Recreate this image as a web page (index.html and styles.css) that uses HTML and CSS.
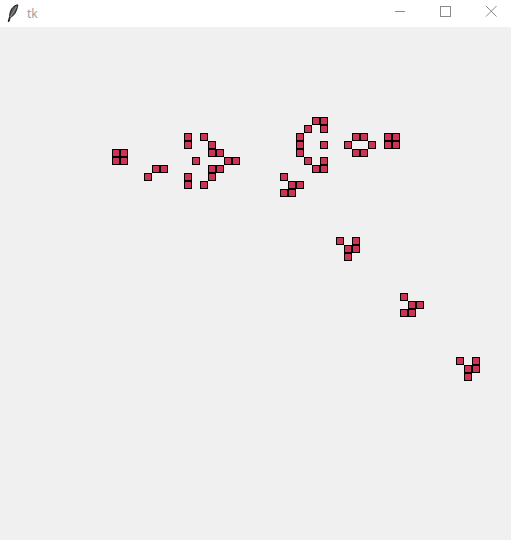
FILE: index.html
```html
<!DOCTYPE html>
<html>
<head>
<meta charset="utf-8">
<link rel="stylesheet" href="styles.css">
</head>
<body>
<div class="window">
  <div class="titlebar">
    <svg class="feather" width="12" height="18" viewBox="0 0 12 18">
      <path d="M10.5 0.8 C7 1.5 4 4.5 3 9 L2.6 12.5 L1.2 17.5 L2 17.6 L3.3 13.3 C7 12 9.5 8 10.8 1.2 Z" fill="#555" stroke="#111" stroke-width="0.9"/>
      <path d="M9.5 2.5 L3.3 13" stroke="#ccc" stroke-width="0.6" fill="none"/>
    </svg>
    <span class="title">tk</span>
    <div class="controls">
      <svg class="ctl" width="46" height="27" viewBox="0 0 46 27"><line x1="22" y1="11.5" x2="32" y2="11.5" stroke="#8a8a8a" stroke-width="1"/></svg>
      <svg class="ctl" width="46" height="27" viewBox="0 0 46 27"><rect x="21.5" y="6.5" width="10" height="10" fill="none" stroke="#8a8a8a" stroke-width="1"/></svg>
      <svg class="ctl" width="46" height="27" viewBox="0 0 46 27"><path d="M21 6 L31.5 16.5 M31.5 6 L21 16.5" stroke="#8a8a8a" stroke-width="1"/></svg>
    </div>
  </div>
  <div class="canvas">
    <div class="cell" style="left:112px;top:122px"></div>
    <div class="cell" style="left:120px;top:122px"></div>
    <div class="cell" style="left:112px;top:130px"></div>
    <div class="cell" style="left:120px;top:130px"></div>

    <div class="cell" style="left:152px;top:138px"></div>
    <div class="cell" style="left:160px;top:138px"></div>
    <div class="cell" style="left:144px;top:146px"></div>

    <div class="cell" style="left:184px;top:106px"></div>
    <div class="cell" style="left:184px;top:114px"></div>
    <div class="cell" style="left:200px;top:106px"></div>
    <div class="cell" style="left:208px;top:114px"></div>
    <div class="cell" style="left:208px;top:122px"></div>
    <div class="cell" style="left:216px;top:122px"></div>
    <div class="cell" style="left:192px;top:130px"></div>
    <div class="cell" style="left:224px;top:130px"></div>
    <div class="cell" style="left:232px;top:130px"></div>
    <div class="cell" style="left:208px;top:138px"></div>
    <div class="cell" style="left:216px;top:138px"></div>
    <div class="cell" style="left:208px;top:146px"></div>
    <div class="cell" style="left:184px;top:146px"></div>
    <div class="cell" style="left:184px;top:154px"></div>
    <div class="cell" style="left:200px;top:154px"></div>

    <div class="cell" style="left:312px;top:90px"></div>
    <div class="cell" style="left:320px;top:90px"></div>
    <div class="cell" style="left:304px;top:98px"></div>
    <div class="cell" style="left:320px;top:98px"></div>
    <div class="cell" style="left:296px;top:106px"></div>
    <div class="cell" style="left:296px;top:114px"></div>
    <div class="cell" style="left:296px;top:122px"></div>
    <div class="cell" style="left:320px;top:114px"></div>
    <div class="cell" style="left:304px;top:130px"></div>
    <div class="cell" style="left:320px;top:130px"></div>
    <div class="cell" style="left:312px;top:138px"></div>
    <div class="cell" style="left:320px;top:138px"></div>

    <div class="cell" style="left:280px;top:146px"></div>
    <div class="cell" style="left:288px;top:154px"></div>
    <div class="cell" style="left:296px;top:154px"></div>
    <div class="cell" style="left:280px;top:162px"></div>
    <div class="cell" style="left:288px;top:162px"></div>

    <div class="cell" style="left:352px;top:106px"></div>
    <div class="cell" style="left:360px;top:106px"></div>
    <div class="cell" style="left:344px;top:114px"></div>
    <div class="cell" style="left:368px;top:114px"></div>
    <div class="cell" style="left:352px;top:122px"></div>
    <div class="cell" style="left:360px;top:122px"></div>

    <div class="cell" style="left:384px;top:106px"></div>
    <div class="cell" style="left:392px;top:106px"></div>
    <div class="cell" style="left:384px;top:114px"></div>
    <div class="cell" style="left:392px;top:114px"></div>

    <div class="cell" style="left:336px;top:210px"></div>
    <div class="cell" style="left:352px;top:210px"></div>
    <div class="cell" style="left:344px;top:218px"></div>
    <div class="cell" style="left:352px;top:218px"></div>
    <div class="cell" style="left:344px;top:226px"></div>

    <div class="cell" style="left:400px;top:266px"></div>
    <div class="cell" style="left:408px;top:274px"></div>
    <div class="cell" style="left:416px;top:274px"></div>
    <div class="cell" style="left:400px;top:282px"></div>
    <div class="cell" style="left:408px;top:282px"></div>

    <div class="cell" style="left:456px;top:330px"></div>
    <div class="cell" style="left:472px;top:330px"></div>
    <div class="cell" style="left:464px;top:338px"></div>
    <div class="cell" style="left:472px;top:338px"></div>
    <div class="cell" style="left:464px;top:346px"></div>
  </div>
</div>
</body>
</html>
```
FILE: styles.css
```css
html, body {
  margin: 0;
  padding: 0;
  background: #f0f0f0;
}
.window {
  width: 511px;
  height: 540px;
  display: flex;
  flex-direction: column;
  overflow: hidden;
}
.titlebar {
  height: 27px;
  background: #ffffff;
  display: flex;
  align-items: center;
  flex: none;
}
.feather {
  margin-left: 7px;
  margin-top: -1px;
}
.title {
  margin-left: 8px;
  font-family: "Noto Sans", "Liberation Sans", sans-serif;
  font-size: 12px;
  color: #a0a0a0;
  margin-top: -1px;
}
.controls {
  margin-left: auto;
  display: flex;
}
.ctl {
  display: block;
}
.canvas {
  position: relative;
  flex: 1;
  background: #f0f0f0;
}
.cell {
  position: absolute;
  width: 8px;
  height: 8px;
  box-sizing: border-box;
  border: 1px solid #000;
  background: #cc3355;
}
```
